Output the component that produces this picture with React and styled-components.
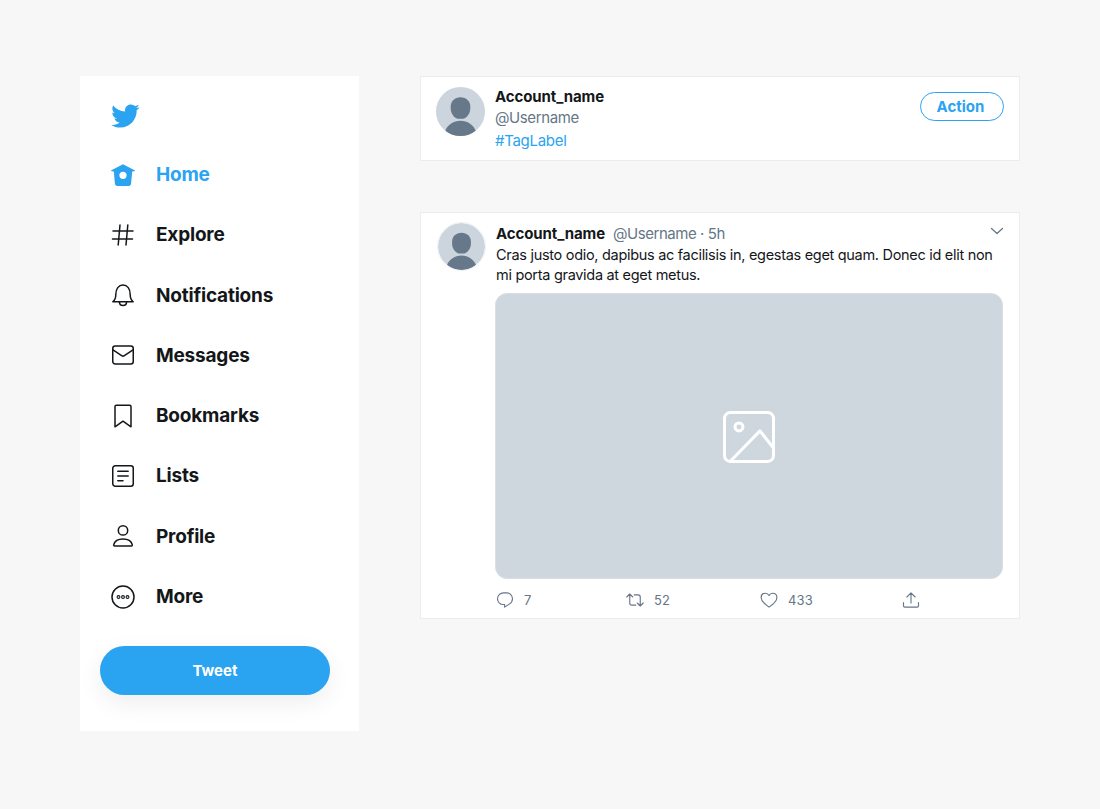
import React from 'react';
import styled, { createGlobalStyle } from 'styled-components';

const GlobalStyle = createGlobalStyle`
  html, body {
    margin: 0;
    padding: 0;
    background-color: #f7f7f7;
    font-family: Inter, "Liberation Sans", sans-serif;
  }
`;

const Page = styled.div`
  display: flex;
  align-items: flex-start;
  gap: 61px;
  width: 1100px;
  height: 809px;
  box-sizing: border-box;
  padding: 76px 80px 0;
  overflow: hidden;
`;

const Sidebar = styled.nav`
  width: 279px;
  height: 655px;
  flex: none;
  box-sizing: border-box;
  background-color: #fff;
  padding: 0 29px 0 20px;
`;

const LogoRow = styled.div`
  display: flex;
  align-items: center;
  height: 68.4px;
  padding: 12px 0 0 9.5px;
  box-sizing: border-box;
  color: #2aa3f0;
`;

const NavRow = styled.a`
  display: flex;
  align-items: center;
  gap: 21px;
  height: 60.29px;
  padding-left: 11px;
  color: ${props => (props.active ? '#2aa3f0' : '#14171a')};
  font-size: 19px;
  font-weight: 700;
  letter-spacing: -0.2px;
`;

const TweetButton = styled.button`
  display: block;
  width: 230px;
  height: 49px;
  margin-top: 19.6px;
  border: none;
  border-radius: 25px;
  background-color: #2aa3f0;
  box-shadow: 0 8px 24px rgba(0, 0, 0, 0.07);
  color: #fff;
  font-family: inherit;
  font-size: 15px;
  font-weight: 700;
`;

const Content = styled.main`
  display: flex;
  flex-direction: column;
  gap: 51px;
  width: 600px;
`;

const Card = styled.section`
  display: flex;
  box-sizing: border-box;
  height: ${props => props.height}px;
  background-color: #fff;
  border: 1px solid #e8edf2;
`;

const ProfileCard = styled(Card)`
  padding: 10px 15px 0;
  gap: 10px;
`;

const TweetCard = styled(Card)`
  padding: 10px 15px 0 16px;
  gap: 10px;
`;

const Avatar = styled.svg`
  display: block;
  flex: none;
  width: ${props => props.size}px;
  height: ${props => props.size}px;
`;

const AvatarFrame = styled.div`
  flex: none;
  align-self: flex-start;
  width: 47px;
  height: 47px;
  margin-top: -1px;
  border-radius: 50%;
  border: 1px solid #eef1f4;
  overflow: hidden;
`;

const ProfileInfo = styled.div`
  flex: 1;
  margin-top: -1px;
  font-size: 15px;
  line-height: 22px;
`;

const Name = styled.div`
  color: #14171a;
  font-weight: 700;
  letter-spacing: -0.1px;
`;

const Handle = styled.div`
  color: #657786;
  margin-top: -1px;
  letter-spacing: -0.4px;
`;

const Tag = styled.div`
  color: #2aa3f0;
  margin-top: 1px;
  letter-spacing: -0.3px;
`;

const ActionButton = styled.button`
  flex: none;
  align-self: flex-start;
  width: 84px;
  height: 29px;
  margin-top: 5px;
  padding: 0 3px 0 0;
  box-sizing: border-box;
  border: 1px solid #2aa3f0;
  border-radius: 15px;
  background-color: #fff;
  color: #2aa3f0;
  font-family: inherit;
  font-size: 15px;
  font-weight: 700;
`;

const TweetBody = styled.div`
  flex: 1;
  min-width: 0;
  display: flex;
  flex-direction: column;
`;

const TweetHeader = styled.div`
  display: flex;
  align-items: center;
  gap: 8px;
  height: 21px;
  font-size: 15px;
`;

const HeaderMeta = styled.span`
  color: #657786;
  flex: 1;
  letter-spacing: -0.45px;
`;

const Chevron = styled.svg`
  flex: none;
  width: 14px;
  height: 14px;
  margin: -5px 0 0;
  color: #657786;
`;

const TweetText = styled.p`
  margin: 1px 0 0;
  color: #14171a;
  font-size: 14.5px;
  line-height: 20px;
  letter-spacing: -0.3px;
`;

const MediaBox = styled.div`
  display: flex;
  flex: none;
  align-items: center;
  justify-content: center;
  box-sizing: border-box;
  width: 508px;
  height: 286px;
  margin: 8px 0 0 -1px;
  padding-top: 2px;
  background-color: #ced6de;
  border: 1px solid #d9dfe5;
  border-radius: 12px;
  color: #fff;
`;

const StatsRow = styled.div`
  display: flex;
  flex: none;
  align-items: center;
  box-sizing: border-box;
  height: 39px;
  padding-top: 2px;
  color: #657786;
  font-size: 13px;
  letter-spacing: 0.2px;
`;

const Stat = styled.div`
  display: flex;
  align-items: center;
  gap: 10px;
  width: ${props => props.width}px;
`;

const Icon = ({ size = 24, children, ...rest }) => (
  <svg
    width={size}
    height={size}
    viewBox="0 0 24 24"
    fill="none"
    stroke="currentColor"
    strokeWidth="1.5"
    strokeLinecap="round"
    strokeLinejoin="round"
    {...rest}
  >
    {children}
  </svg>
);

const BirdIcon = () => (
  <svg width="30" height="30" viewBox="0 0 24 24" fill="currentColor">
    <path d="M23.643 4.937c-.835.37-1.732.62-2.675.733.962-.576 1.7-1.49 2.048-2.578-.9.534-1.897.922-2.958 1.13-.85-.904-2.06-1.47-3.4-1.47-2.572 0-4.658 2.086-4.658 4.66 0 .364.042.718.12 1.06-3.873-.195-7.304-2.05-9.602-4.868-.4.69-.63 1.49-.63 2.342 0 1.616.823 3.043 2.072 3.878-.764-.025-1.482-.234-2.11-.583v.06c0 2.257 1.605 4.14 3.737 4.568-.392.106-.803.162-1.227.162-.3 0-.593-.028-.877-.082.593 1.85 2.313 3.198 4.352 3.234-1.595 1.25-3.604 1.995-5.786 1.995-.376 0-.747-.022-1.112-.065 2.062 1.323 4.51 2.093 7.14 2.093 8.57 0 13.255-7.098 13.255-13.254 0-.2-.005-.402-.014-.602.91-.658 1.7-1.477 2.323-2.41z" />
  </svg>
);

const HomeIcon = () => (
  <svg width="24" height="24" viewBox="0 0 24 24" fill="currentColor">
    <path fillRule="evenodd" d="M12 1.2 23.6 7.2c.5.3.4 1-.2 1.1L21.2 8.6 20.1 20.6c-.1 1.4-1 2.4-2.5 2.4H6.4c-1.5 0-2.4-1-2.5-2.4L2.8 8.6.6 8.3C0 8.2-.1 7.5.4 7.2L12 1.2ZM12 8.7a3.6 3.6 0 1 0 0 7.2 3.6 3.6 0 0 0 0-7.2Z" />
  </svg>
);

const HashIcon = () => (
  <Icon>
    <path d="M2 8h20M1.500 16h20M9 2 7.200 22M16.800 2 15 22" />
  </Icon>
);

const BellIcon = () => (
  <Icon>
    <path d="M1.800 18.800c1.800-1.500 3-4 3-7.400C4.800 6 7.600 2 12 2s7.200 4 7.200 9.400c0 3.400 1.200 5.900 3 7.400H1.800Z" />
    <path d="M8.400 18.800c0 2.200 1.600 3.800 3.600 3.800s3.600-1.600 3.600-3.800" />
  </Icon>
);

const MailIcon = () => (
  <Icon>
    <rect x="1.750" y="3" width="20.500" height="18" rx="2.500" />
    <path d="M2 6.800l9 6c.600.400 1.400.400 2 0l9-6" />
  </Icon>
);

const BookmarkIcon = () => (
  <Icon>
    <path d="M4 2.500C4 1.700 4.500 1.200 5.300 1.200h13.400c.800 0 1.300.500 1.300 1.300v20.300L12 17.200l-8 5.600V2.500Z" />
  </Icon>
);

const ListIcon = () => (
  <Icon>
    <rect x="1.750" y="1.750" width="20.500" height="20.500" rx="2.500" />
    <path d="M6.800 7.300h10.400M6.800 12h10.400M6.800 16.700h5.200" />
  </Icon>
);

const PersonIcon = () => (
  <Icon>
    <circle cx="12" cy="6.400" r="4.700" />
    <path d="M3.600 22c-.700 0-1.100-.500-.900-1.200.900-3.600 4.700-5.800 9.300-5.800s8.400 2.200 9.300 5.800c.200.700-.200 1.200-.900 1.200H3.600Z" />
  </Icon>
);

const MoreIcon = () => (
  <Icon>
    <circle cx="12" cy="12" r="11" />
    <circle cx="7.500" cy="12" r="1.400" strokeWidth="1.100" />
    <circle cx="12" cy="12" r="1.400" strokeWidth="1.100" />
    <circle cx="16.500" cy="12" r="1.400" strokeWidth="1.100" />
  </Icon>
);

const CommentIcon = () => (
  <Icon size={18}>
    <path d="M10 2.500h4c4.500 0 8 3.400 8 7.800 0 3-1.700 5.600-4.400 7.200L11.500 21.500v-3.500H10c-4.600 0-8-3.400-8-7.700 0-4.400 3.500-7.800 8-7.800Z" />
  </Icon>
);

const RetweetIcon = () => (
  <Icon size={18}>
    <path d="M1 8 5 4l4 4M5 4.500V16c0 1.700 1.100 2.800 2.800 2.800H13" />
    <path d="M23 16l-4 4-4-4M19 19.500V8c0-1.700-1.100-2.800-2.800-2.800H11" />
  </Icon>
);

const HeartIcon = () => (
  <Icon size={18}>
    <path d="M12 21.500C5.500 17 1.500 13 1.500 8.500 1.500 5.200 4 3 7 3c2.200 0 4 1.100 5 3 1-1.900 2.800-3 5-3 3 0 5.500 2.200 5.500 5.500 0 4.500-4 8.500-10.500 13Z" />
  </Icon>
);

const ShareIcon = () => (
  <Icon size={18}>
    <path d="M12 16V2.500M6.500 8 12 2.500 17.500 8" />
    <path d="M2 15.500v4.200c0 1.100.8 1.800 1.800 1.800h16.400c1 0 1.800-.700 1.800-1.800v-4.200" />
  </Icon>
);

const ImageIcon = () => (
  <Icon size={56} strokeWidth="1.300">
    <rect x="1.500" y="1.500" width="21" height="21" rx="2.500" />
    <circle cx="7.700" cy="7.700" r="1.700" />
    <path d="M3.900 22.500 16.700 9.400l5.800 7.300" />
  </Icon>
);

const AvatarArt = ({ size }) => (
  <Avatar size={size} viewBox="0 0 50 50">
    <circle cx="25" cy="25" r="25" fill="#ccd5dd" />
    <path d="M25 10.500c5.800 0 10 4 10 9.500v2c0 5-3.500 9.500-7 10.500h-6c-3.500-1-7-5.500-7-10.500v-2c0-5.500 4.200-9.500 10-9.500Z" fill="#66788a" />
    <path d="M9.500 44.600C12 38.600 18 34.500 25 34.500s13 4.100 15.500 10.100A24.900 24.900 0 0 1 25 50a24.900 24.900 0 0 1-15.500-5.400Z" fill="#66788a" />
  </Avatar>
);

const navItems = [
  { label: 'Home', icon: <HomeIcon />, active: true },
  { label: 'Explore', icon: <HashIcon /> },
  { label: 'Notifications', icon: <BellIcon /> },
  { label: 'Messages', icon: <MailIcon /> },
  { label: 'Bookmarks', icon: <BookmarkIcon /> },
  { label: 'Lists', icon: <ListIcon /> },
  { label: 'Profile', icon: <PersonIcon /> },
  { label: 'More', icon: <MoreIcon /> },
];

const App = () => (
  <>
    <GlobalStyle />
    <Page>
      <Sidebar>
        <LogoRow>
          <BirdIcon />
        </LogoRow>
        {navItems.map(item => (
          <NavRow key={item.label} active={item.active}>
            {item.icon}
            {item.label}
          </NavRow>
        ))}
        <TweetButton>Tweet</TweetButton>
      </Sidebar>
      <Content>
        <ProfileCard height={85}>
          <AvatarArt size={49} />
          <ProfileInfo>
            <Name>Account_name</Name>
            <Handle>@Username</Handle>
            <Tag>#TagLabel</Tag>
          </ProfileInfo>
          <ActionButton>Action</ActionButton>
        </ProfileCard>
        <TweetCard height={407}>
          <AvatarFrame>
            <AvatarArt size={47} />
          </AvatarFrame>
          <TweetBody>
            <TweetHeader>
              <Name>Account_name</Name>
              <HeaderMeta>@Username · 5h</HeaderMeta>
              <Chevron viewBox="0 0 14 14" fill="none" stroke="currentColor" strokeWidth="1.300" strokeLinecap="round" strokeLinejoin="round">
                <path d="M1.500 4.500 7 9.500l5.500-5" />
              </Chevron>
            </TweetHeader>
            <TweetText>
              Cras justo odio, dapibus ac facilisis in, egestas eget quam. Donec id elit non mi porta gravida at eget metus.
            </TweetText>
            <MediaBox>
              <ImageIcon />
            </MediaBox>
            <StatsRow>
              <Stat width={130}><CommentIcon />7</Stat>
              <Stat width={134}><RetweetIcon />52</Stat>
              <Stat width={142}><HeartIcon />433</Stat>
              <Stat width={18}><ShareIcon /></Stat>
            </StatsRow>
          </TweetBody>
        </TweetCard>
      </Content>
    </Page>
  </>
);

export default App;
